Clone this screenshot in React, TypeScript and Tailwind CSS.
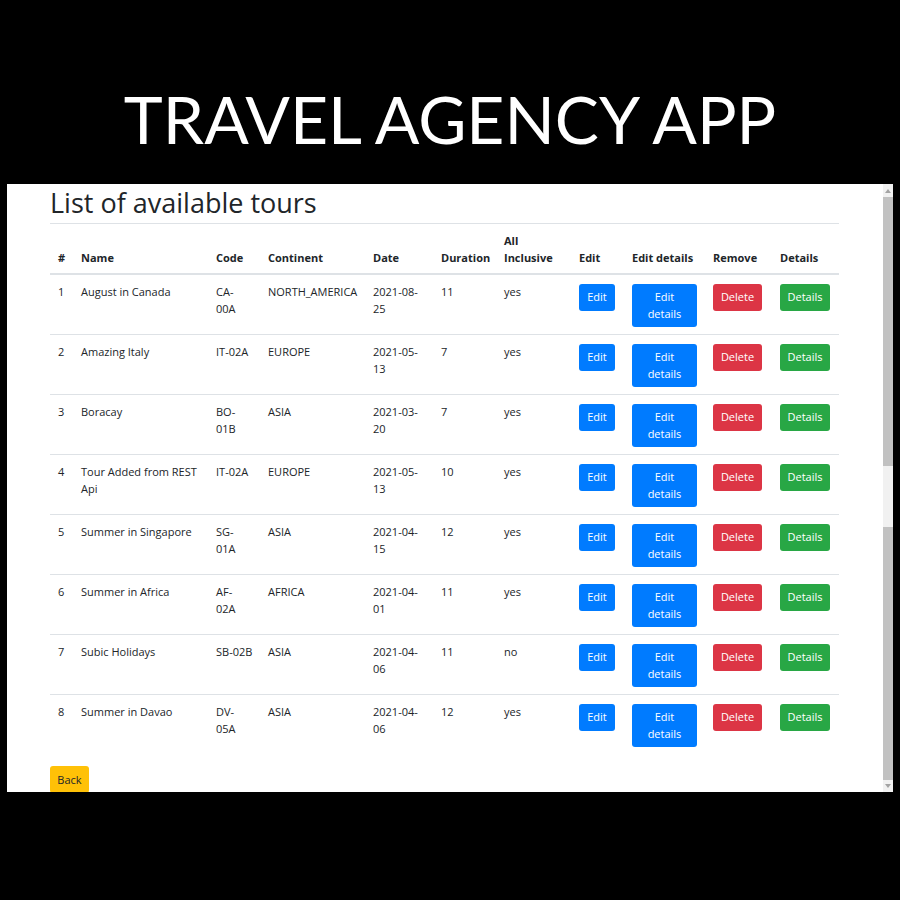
import React from "react";

type Row = {
  id: number;
  name: string[];
  code: string[];
  continent: string;
  date: string[];
  duration: string;
  inclusive: string;
};

const rows: Row[] = [
  { id: 1, name: ["August in Canada"], code: ["CA-", "00A"], continent: "NORTH_AMERICA", date: ["2021-08-", "25"], duration: "11", inclusive: "yes" },
  { id: 2, name: ["Amazing Italy"], code: ["IT-02A"], continent: "EUROPE", date: ["2021-05-", "13"], duration: "7", inclusive: "yes" },
  { id: 3, name: ["Boracay"], code: ["BO-", "01B"], continent: "ASIA", date: ["2021-03-", "20"], duration: "7", inclusive: "yes" },
  { id: 4, name: ["Tour Added from REST", "Api"], code: ["IT-02A"], continent: "EUROPE", date: ["2021-05-", "13"], duration: "10", inclusive: "yes" },
  { id: 5, name: ["Summer in Singapore"], code: ["SG-", "01A"], continent: "ASIA", date: ["2021-04-", "15"], duration: "12", inclusive: "yes" },
  { id: 6, name: ["Summer in Africa"], code: ["AF-", "02A"], continent: "AFRICA", date: ["2021-04-", "01"], duration: "11", inclusive: "yes" },
  { id: 7, name: ["Subic Holidays"], code: ["SB-02B"], continent: "ASIA", date: ["2021-04-", "06"], duration: "11", inclusive: "no" },
  { id: 8, name: ["Summer in Davao"], code: ["DV-", "05A"], continent: "ASIA", date: ["2021-04-", "06"], duration: "12", inclusive: "yes" },
];

function Lines({ lines }: { lines: string[] }) {
  return (
    <>
      {lines.map((l, i) => (
        <React.Fragment key={i}>
          {i > 0 && <br />}
          {l}
        </React.Fragment>
      ))}
    </>
  );
}

const th = "border-t border-b-2 border-[#dee2e6] px-[8px] pt-[9px] pb-[7px] text-left align-bottom font-bold whitespace-nowrap";
const td = "border-t border-[#dee2e6] px-[8px] pt-[9px] pb-[7px] align-top whitespace-nowrap";
const btn = "inline-block rounded-[3px] border border-transparent pt-[4px] pb-[4px] text-center text-white leading-[16.5px]";

export default function App() {
  return (
    <div className="w-[900px] h-[900px] bg-black overflow-hidden">
      <div className="h-[184px] pt-[86px] text-center text-white font-['Lato',sans-serif] text-[66px] leading-none font-normal">
        TRAVEL AGENCY APP
      </div>
      <div className="ml-[7px] w-[886px] h-[608px] bg-white flex overflow-hidden">
        <div className="flex-1 overflow-hidden pl-[43px] font-['Open_Sans',sans-serif] text-[#212529] text-[11px] leading-[16.5px]">
          <h2 className="mt-[3px] mb-[4px] text-[27px] leading-[32px] font-medium">List of available tours</h2>
          <table className="table-fixed border-collapse w-[789px]">
            <thead>
              <tr>
                <th className={`${th} w-[23px]`}>#</th>
                <th className={`${th} w-[135px]`}>Name</th>
                <th className={`${th} w-[52px]`}>Code</th>
                <th className={`${th} w-[105px]`}>Continent</th>
                <th className={`${th} w-[68px]`}>Date</th>
                <th className={`${th} w-[63px]`}>Duration</th>
                <th className={`${th} w-[75px]`}>All<br />Inclusive</th>
                <th className={`${th} w-[53px]`}>Edit</th>
                <th className={`${th} w-[81px]`}>Edit details</th>
                <th className={`${th} w-[67px]`}>Remove</th>
                <th className={`${th} w-[67px]`}>Details</th>
              </tr>
            </thead>
            <tbody>
              {rows.map((r) => (
                <tr key={r.id}>
                  <td className={td}>{r.id}</td>
                  <td className={td}><Lines lines={r.name} /></td>
                  <td className={td}><Lines lines={r.code} /></td>
                  <td className={td}>{r.continent}</td>
                  <td className={td}><Lines lines={r.date} /></td>
                  <td className={td}>{r.duration}</td>
                  <td className={td}>{r.inclusive}</td>
                  <td className={td}>
                    <span className={`${btn} w-[36px] bg-[#007bff]`}>Edit</span>
                  </td>
                  <td className={td}>
                    <span className={`${btn} w-[65px] bg-[#007bff]`}>Edit<br />details</span>
                  </td>
                  <td className={td}>
                    <span className={`${btn} w-[49px] bg-[#dc3545]`}>Delete</span>
                  </td>
                  <td className={td}>
                    <span className={`${btn} w-[50px] bg-[#28a745]`}>Details</span>
                  </td>
                </tr>
              ))}
            </tbody>
          </table>
          <div className="mt-[12px]">
            <span className="inline-block w-[39px] rounded-[3px] border border-transparent bg-[#ffc107] pt-[5px] pb-[3px] text-center leading-[16.5px] text-[#212529]">Back</span>
          </div>
        </div>
        <div className="w-[10px] flex flex-col bg-[#f1f1f1]">
          <div className="h-[13px] flex items-center justify-center">
            <svg width="6" height="4" viewBox="0 0 6 4"><path d="M3 0 L6 4 L0 4 Z" fill="#a3a3a3" /></svg>
          </div>
          <div className="h-[269px] bg-[#c1c1c1]" />
          <div className="h-[61px] bg-[#f1f1f1]" />
          <div className="h-[253px] bg-[#c1c1c1]" />
          <div className="flex-1 flex items-center justify-center">
            <svg width="6" height="4" viewBox="0 0 6 4"><path d="M0 0 L6 0 L3 4 Z" fill="#a3a3a3" /></svg>
          </div>
        </div>
      </div>
    </div>
  );
}
